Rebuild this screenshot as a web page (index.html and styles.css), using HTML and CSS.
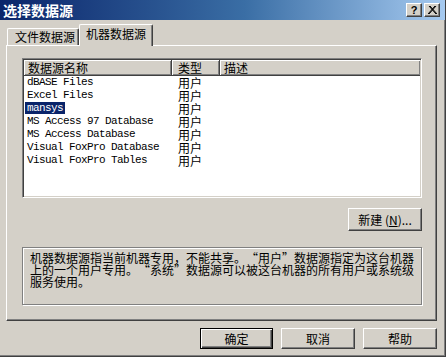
FILE: index.html
```html
<!DOCTYPE html>
<html lang="zh-CN">
<head>
  <meta charset="UTF-8" />
  <title>选择数据源</title>
  <link rel="stylesheet" href="styles.css">
</head>
<body>
  <div class="dialog">
    <div class="titlebar">
      <div class="title">选择数据源</div>
      <div class="cap-btn">?</div>
      <div class="cap-btn close">
        <svg width="9" height="8" viewBox="0 0 9 8"><path d="M1 0 L8 8 M8 0 L1 8 M2 0 L9 8 M7 0 L0 8" stroke="#000" stroke-width="1" fill="none"/></svg>
      </div>
    </div>

    <div class="tabs">
      <div class="tab">文件数据源</div>
      <div class="tab active">机器数据源</div>
    </div>

    <div class="panel">
      <div class="list">
        <div class="list-head">
          <div class="head-cell">数据源名称</div>
          <div class="head-cell">类型</div>
          <div class="head-cell">描述</div>
        </div>
        <div class="row"><div class="name"><span>dBASE Files</span></div><div class="type">用户</div></div>
        <div class="row"><div class="name"><span>Excel Files</span></div><div class="type">用户</div></div>
        <div class="row"><div class="name"><span class="selected">mansys</span></div><div class="type">用户</div></div>
        <div class="row"><div class="name"><span>MS Access 97 Database</span></div><div class="type">用户</div></div>
        <div class="row"><div class="name"><span>MS Access Database</span></div><div class="type">用户</div></div>
        <div class="row"><div class="name"><span>Visual FoxPro Database</span></div><div class="type">用户</div></div>
        <div class="row"><div class="name"><span>Visual FoxPro Tables</span></div><div class="type">用户</div></div>
      </div>

      <div class="actions">
        <div class="btn new-btn">新建 (<u>N</u>)...</div>
      </div>

      <div class="desc">
        机器数据源指当前机器专用，不能共享。<span class="q-open">“</span>用户<span class="q-close">”</span>数据源指定为这台机器<br>
        上的一个用户专用。<span class="q-open">“</span>系统<span class="q-close">”</span>数据源可以被这台机器的所有用户或系统级<br>
        服务使用。
      </div>
    </div>

    <div class="footer">
      <div class="btn default">确定</div>
      <div class="btn">取消</div>
      <div class="btn">帮助</div>
    </div>
  </div>
</body>
</html>
```

FILE: styles.css
```css
body {
  margin: 0;
  width: 446px;
  height: 357px;
  overflow: hidden;
  font-family: "Noto Sans CJK SC", sans-serif;
  font-size: 12px;
  color: #000;
  background: #d4d0c8;
}
.dialog {
  box-sizing: border-box;
  height: 357px;
  background: #d4d0c8;
  border-right: 1px solid #404040;
  border-bottom: 1px solid #404040;
  box-shadow: inset -1px -1px 0 #808080;
}

/* заголовок */
.titlebar {
  height: 20px;
  display: flex;
  align-items: center;
  padding: 0 5px 0 3px;
  background: linear-gradient(to right, #0a246a, #3a6ea5 55%, #a6caf0);
}
.title {
  flex: 1;
  color: #fff;
  font-weight: bold;
  font-size: 14px;
  line-height: 20px;
}
.cap-btn {
  box-sizing: border-box;
  width: 16px;
  height: 14px;
  margin-left: 2px;
  background: #d4d0c8;
  border: 1px solid;
  border-color: #fff #404040 #404040 #fff;
  box-shadow: inset -1px -1px 0 #808080;
  font-family: "Liberation Sans", sans-serif;
  font-weight: bold;
  font-size: 11px;
  line-height: 12px;
  text-align: center;
  display: flex;
  align-items: center;
  justify-content: center;
}

/* вкладки */
.tabs {
  height: 25px;
  display: flex;
  align-items: flex-end;
  padding-left: 7px;
}
.tab {
  box-sizing: border-box;
  height: 17px;
  width: 72px;
  padding-left: 7px;
  line-height: 15px;
  border: 1px solid;
  border-bottom: none;
  border-color: #fff #404040 #fff #fff;
  border-radius: 2px 2px 0 0;
  box-shadow: inset -1px 0 0 #808080;
}
.tab.active {
  position: relative;
  z-index: 1;
  height: 22px;
  width: 74px;
  margin-bottom: -1px;
  padding-left: 6px;
  line-height: 17px;
  background: #d4d0c8;
}

/* панель */
.panel {
  box-sizing: border-box;
  height: 276px;
  margin: 0 8px 0 6px;
  padding: 12px 14px 0 15px;
  border: 1px solid;
  border-color: #fff #404040 #404040 #fff;
  box-shadow: inset -1px -1px 0 #808080;
}
.list {
  box-sizing: border-box;
  height: 140px;
  padding: 1px;
  background: #fff;
  border: 1px solid;
  border-color: #808080 #fff #fff #808080;
  box-shadow: inset 1px 1px 0 #404040, inset -1px -1px 0 #d4d0c8;
}
.list-head,
.row {
  display: grid;
  grid-template-columns: 148px 48px 1fr;
}
.head-cell {
  box-sizing: border-box;
  height: 16px;
  line-height: 15px;
  padding-left: 4px;
  background: #d4d0c8;
  border-right: 1px solid #404040;
  border-bottom: 1px solid #404040;
  box-shadow: inset 1px 1px 0 #fff, inset -1px -1px 0 #808080;
}
.head-cell:nth-child(2) {
  padding-left: 6px;
}
.head-cell:last-child {
  border-right: none;
}
.row {
  height: 13px;
  line-height: 13px;
}
.name {
  padding-left: 1px;
  font-family: "Liberation Mono", monospace;
  font-size: 11px;
  letter-spacing: -0.6px;
  white-space: nowrap;
}
.name span {
  padding: 0 2px;
}
.selected {
  background: #0a246a;
  color: #fff;
}
.type {
  padding-left: 6px;
}

/* кнопки */
.actions {
  display: flex;
  justify-content: flex-end;
  margin-top: 10px;
}
.btn {
  box-sizing: border-box;
  width: 74px;
  height: 21px;
  line-height: 19px;
  text-align: center;
  background: #d4d0c8;
  border: 1px solid;
  border-color: #fff #404040 #404040 #fff;
  box-shadow: inset -1px -1px 0 #808080;
}
.new-btn {
  height: 23px;
  line-height: 21px;
}
.desc {
  box-sizing: border-box;
  height: 58px;
  margin-top: 16px;
  padding: 4px 0 0 7px;
  line-height: 12px;
  white-space: nowrap;
  border: 1px solid #808080;
  box-shadow: 1px 1px 0 #fff, inset 1px 1px 0 #fff;
}
.q-open,
.q-close {
  display: inline-block;
  width: 12px;
}
.q-open {
  text-align: right;
}
.q-close {
  text-align: left;
}
.footer {
  display: flex;
  justify-content: flex-end;
  gap: 8px;
  margin-top: 7px;
  padding-right: 8px;
}
.footer .default {
  width: 73px;
  border: 1px solid #000;
  box-shadow: inset 1px 1px 0 #fff, inset -1px -1px 0 #404040, inset -2px -2px 0 #808080;
}
```
